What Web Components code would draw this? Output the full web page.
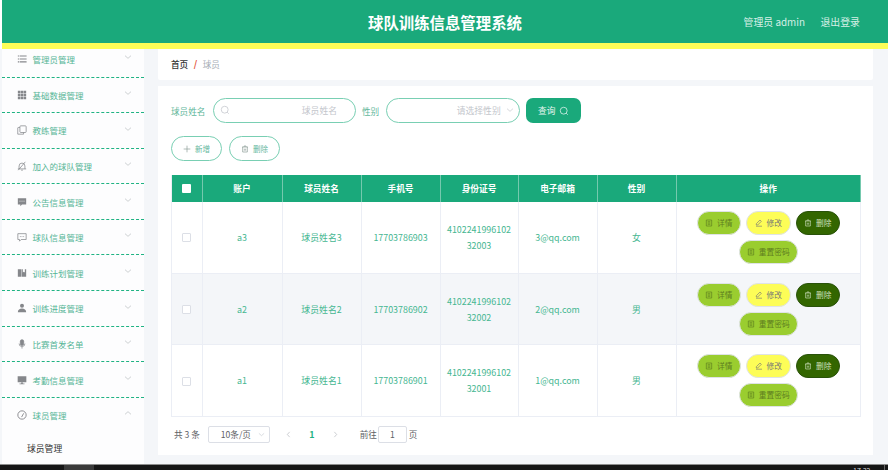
<!DOCTYPE html>
<html lang="zh"><head><meta charset="utf-8"><style>
html,body{margin:0;padding:0;height:470px;overflow:hidden;background:#fff;font-family:"Noto Sans CJK SC","Noto Sans",sans-serif}
</style></head><body>
<app-shell></app-shell>
<script>
const I={
 search:'<svg viewBox="0 0 16 16" fill="none" stroke="currentColor" stroke-width="1.2"><circle cx="7.5" cy="7.5" r="5.5"/><path d="M11.5 11.5L14 14"/></svg>',
 chev:'<svg viewBox="0 0 12 12" fill="none" stroke="currentColor" stroke-width="1"><path d="M1.5 4l4.5 4 4.5-4"/></svg>',
 up:'<svg viewBox="0 0 12 12" fill="none" stroke="currentColor" stroke-width="1"><path d="M1.5 8l4.5-4 4.5 4"/></svg>',
 plus:'<svg viewBox="0 0 12 12" fill="none" stroke="currentColor" stroke-width="1"><path d="M6 1v10M1 6h10"/></svg>',
 trash:'<svg viewBox="0 0 12 12" fill="none" stroke="currentColor" stroke-width="1"><path d="M1.5 3h9M4.5 3V1.5h3V3M2.5 3v7.5h7V3M5 5.5v3M7 5.5v3"/></svg>',
 doc:'<svg viewBox="0 0 12 12" fill="none" stroke="currentColor" stroke-width="1"><path d="M2 1.5h8v9H2zM4 4h4M4 6h4M4 8h4"/></svg>',
 edit:'<svg viewBox="0 0 12 12" fill="none" stroke="currentColor" stroke-width="1"><path d="M7.5 1.5l2 2L4 9H2V7zM1.500 10.800h9"/></svg>',
 menu:'<svg viewBox="0 0 12 12" fill="currentColor"><path d="M1 1.800h1.800v1.300H1zM3.500 1.800H11.500v1.300H3.500zM1 5.300h1.800v1.300H1zM3.500 5.300H11.500v1.300H3.500zM1 8.800h1.800v1.300H1zM3.500 8.800H11.500v1.300H3.500z"/></svg>',
 grid:'<svg viewBox="0 0 12 12" fill="currentColor"><path d="M1 1h3v3H1zM4.500 1h3v3h-3zM8 1h3v3H8zM1 4.500h3v3H1zM4.500 4.500h3v3h-3zM8 4.500h3v3H8zM1 8h3v3H1zM4.500 8h3v3h-3zM8 8h3v3H8z"/></svg>',
 copy:'<svg viewBox="0 0 12 12" fill="none" stroke="currentColor" stroke-width=".9"><rect x="3.500" y="1" width="7.500" height="8" rx="1"/><path d="M3.500 3H1.500a.6.6 0 0 0-.6.6V11h7V9"/></svg>',
 bell:'<svg viewBox="0 0 12 12" fill="none" stroke="currentColor" stroke-width=".9"><path d="M2.500 9.500V6a3.500 3.500 0 0 1 7 0v3.500M1 9.500h10M5 11h2M1.500 11L10 1"/></svg>',
 chatf:'<svg viewBox="0 0 12 12" fill="currentColor"><path d="M1 1.500h10v7.500H6L4 11V9H1z"/><path fill="#fff" d="M3 4.500h1.200v1H3zM5.400 4.500h1.200v1H5.400zM7.800 4.500H9v1H7.800z"/></svg>',
 chat:'<svg viewBox="0 0 12 12" fill="none" stroke="currentColor" stroke-width=".9"><path d="M1 2h10v7H5l-2 2V9H1z"/><path d="M3.500 5.500h1M5.500 5.500h1M7.500 5.500h1"/></svg>',
 book:'<svg viewBox="0 0 12 12" fill="currentColor"><path d="M1 1.500h4v9H1zM5.500 1.500h1.500v4l1.200-1 1.200 1v-4H11v9H5.500z"/></svg>',
 user:'<svg viewBox="0 0 12 12" fill="currentColor"><circle cx="6" cy="3.300" r="2.400"/><path d="M1 11c0-3 2.200-4.500 5-4.500s5 1.500 5 4.500z"/></svg>',
 mic:'<svg viewBox="0 0 12 12" fill="none" stroke="currentColor" stroke-width=".9"><rect x="4" y=".8" width="4" height="7" rx="2" fill="currentColor"/><path d="M2.500 5.500a3.500 3.500 0 0 0 7 0M6 9v2.500"/></svg>',
 mon:'<svg viewBox="0 0 12 12" fill="currentColor"><path d="M.8 1.500h10.400v7.300H.8zM5 9h2v1.200h2V11H3v-.8h2z"/></svg>',
 gauge:'<svg viewBox="0 0 12 12" fill="none" stroke="currentColor" stroke-width="1.100"><circle cx="6" cy="6" r="5"/><path d="M5.500 8.500L8 4"/></svg>'
};
function def(name,css,html){
 customElements.define(name,class extends HTMLElement{
  constructor(){super();const r=this.attachShadow({mode:'open'});
   r.innerHTML='<style>'+css+'</style>'+(typeof html==='function'?html(this):html);}
 });
}
def('top-bar',`
 :host{display:flex;align-items:center;height:43px;margin-left:2px;background:#1aa97b;border-bottom:6px solid #fdfd57;color:#fff;position:relative;padding:0 28px 0 0;justify-content:flex-end;gap:15.500px;font-size:9.900px;box-sizing:content-box}
 .t{position:absolute;left:366px;width:154px;top:9px;font-size:15.400px;font-weight:700;line-height:26px;white-space:nowrap}
 span{color:#d6efe6;line-height:16px;margin-top:1px}
`,`<div class="t">球队训练信息管理系统</div><span>管理员 admin</span><span>退出登录</span>`);

def('nav-item',`
 :host{display:block;height:35.600px;box-sizing:border-box;border-bottom:1.500px dashed #1fb383;position:relative}
 .r{display:flex;align-items:center;height:34px;padding:.5px 0 0 15px;box-sizing:border-box;gap:5.500px;font-size:8.500px;color:#55b596}
 svg{display:block}
 .i{width:10px;height:10px;color:#85878b;flex:none}
 .i svg{width:10px;height:10px}
 .c{position:absolute;left:122px;top:11.500px;width:8px;height:8px;color:#b5b9bd}
 .c svg{width:8px;height:8px}
 .s{padding:0 0 0 25px;font-size:8.800px;color:#333;height:32px;line-height:33px}
 :host([open]){height:67px}
`,t=>`<div class="r"><span class="i">${I[t.getAttribute('icon')]}</span><span>${t.getAttribute('label')}</span></div><span class="c">${t.hasAttribute('open')?I.up:I.chev}</span>${t.hasAttribute('open')?`<div class="s">${t.getAttribute('sub')}</div>`:''}`);

def('side-bar',`
 :host{display:block;width:142px;margin-left:2px;background:#fdfdfe;overflow:hidden;flex:none}
 .in{margin-top:-7.100px}
`,`<div class="in"><slot></slot></div>`);

def('bread-crumb',`
 :host{display:flex;align-items:center;height:31px;box-sizing:border-box;background:#fff;padding:0 12px 2px 13px;font-size:8.600px;color:#333;font-weight:500;border-radius:0 0 2px 2px}
 i{font-style:normal;color:#e2543a;margin:0 5.500px;font-size:9px;font-weight:700}
 span{color:#a6adb5;font-weight:400}
`,`首页<i>/</i><span>球员</span>`);

def('pill-input',`
 :host{display:flex;align-items:center;box-sizing:border-box;height:25px;border:1px solid #79cfb3;border-radius:13px;background:#fff;position:relative;font-size:8.800px;color:#c3c6cc;justify-content:flex-end}
 .s{position:absolute;left:6px;top:6px;width:10px;height:10px;color:#c3c6cc}
 .d{position:absolute;right:5px;top:7px;width:8px;height:8px;color:#c3c6cc}
 svg{display:block}
`,t=>`${t.hasAttribute('search')?`<span class="s">${I.search}</span>`:''}<span style="margin-right:${t.getAttribute('mr')}px">${t.getAttribute('ph')}</span>${t.hasAttribute('drop')?`<span class="d">${I.chev}</span>`:''}`);

def('ghost-btn',`
 :host{display:inline-flex;align-items:center;justify-content:center;gap:4px;box-sizing:border-box;width:51px;height:25px;border:1px solid #79cfb3;border-radius:13px;background:#fff;font-size:7.500px;color:#65b79d}
 span{width:8px;height:8px;display:block;color:#8a9a94}
 svg{display:block}
`,t=>`<span>${I[t.getAttribute('icon')]}</span>${t.getAttribute('label')}`);

def('act-btn',`
 :host{display:inline-flex;align-items:center;justify-content:center;gap:4px;box-sizing:border-box;height:24px;border-radius:12px;font-size:7.700px;border:1px solid #dfe3e6;color:#5e7d1f;background:#9acd2f;flex:none;width:44.500px}
 :host([k=y]){background:#fdfd57;color:#777}
 :host([k=d]){background:#336600;color:#cfe0bf;border-color:#29520a}
 :host([k=w]){width:59px}
 span{width:8px;height:8px;display:block}
 svg{display:block}
`,t=>`<span>${I[t.getAttribute('icon')]}</span>${t.getAttribute('label')}`);

def('data-table',`
 :host{display:block}
 .g{display:grid;grid-template-columns:30.500px 80px 79px 79px 78px 79px 79px 184.500px;border-left:1px solid #ebeef5;font-size:8.900px;color:#45b691;text-align:center}
 .h{background:#1aa97b;color:#fff;font-weight:700;height:27px;display:flex;align-items:center;justify-content:center;border-right:1px solid #75c9ae;box-sizing:border-box;font-size:8.700px}
 .h:last-child{border-right:none}
 .c{display:flex;align-items:center;justify-content:center;height:71.700px;box-sizing:border-box;border-right:1px solid #ebeef5;border-bottom:1px solid #ebeef5;background:var(--bg,#fff);line-height:16px;padding:1px 8px 0}
 .alt{--bg:#f4f6f9}
 .cb{width:9px;height:9px;background:#fff;border:1px solid #dcdfe6;border-radius:1px;box-sizing:border-box}
 .hc{width:9px;height:9px;background:#fff;border-radius:1px}
 .c.ops{flex-wrap:wrap;align-content:center;gap:5px;padding:0 15px}
 .r{display:contents}
 .c.id{word-break:break-all;padding:1px 6px 0}
`,()=>{
 const rows=[['a3','球员姓名3','17703786903','410224199610232003','3@qq.com','女'],['a2','球员姓名2','17703786902','410224199610232002','2@qq.com','男'],['a1','球员姓名1','17703786901','410224199610232001','1@qq.com','男']];
 let h='<div class="g"><div class="h"><span class="hc"></span></div>'+['账户','球员姓名','手机号','身份证号','电子邮箱','性别','操作'].map(x=>`<div class="h">${x}</div>`).join('');
 rows.forEach((r,i)=>{
  h+=`<div class="r ${i==1?'alt':''}"><div class="c"><span class="cb"></span></div>`+r.map((v,j)=>`<div class="c ${j==3?'id':''}">${v}</div>`).join('')+
  `<div class="c ops"><act-btn icon="doc" label="详情"></act-btn><act-btn k="y" icon="edit" label="修改"></act-btn><act-btn k="d" icon="trash" label="删除"></act-btn><act-btn k="w" icon="doc" label="重置密码"></act-btn></div></div>`;
 });
 return h+'</div>';
});

def('page-bar',`
 :host{display:flex;align-items:center;font-size:8.600px;color:#606266;height:24px}
 .sz{display:flex;align-items:center;justify-content:space-between;box-sizing:border-box;width:62px;height:17px;border:1px solid #dcdfe6;border-radius:2px;margin-left:8px;padding:0 4px 0 12px}
 .sz b{font-weight:400;width:7px;height:7px;color:#c0c4cc;display:block}
 svg{display:block}
 .a{width:7px;height:7px;color:#a9adb3;display:block}
 .n{color:#1fb383;font-weight:700;margin:0 17.500px;font-size:9px}
 .ip{display:flex;align-items:center;justify-content:center;box-sizing:border-box;width:29px;height:17px;border:1px solid #dcdfe6;border-radius:2px;margin:0 2px 0 1px}
`,`<span>共 3 条</span><div class="sz"><span>10条/页</span><b>${I.chev}</b></div>
<span class="a" style="margin-left:15px;transform:rotate(90deg)">${I.chev}</span><span class="n">1</span><span class="a" style="transform:rotate(-90deg)">${I.chev}</span>
<span style="margin-left:20.500px">前往</span><span class="ip">1</span><span>页</span>`);

def('main-card',`
 :host{display:block;height:369px;box-sizing:border-box;background:#fff;padding:12px 12px 0 13px}
 .f{display:flex;align-items:center;height:25px;font-size:8.600px;color:#5fb79b}
 .q{display:flex;align-items:center;justify-content:center;gap:4px;width:55px;height:25px;background:#1aa97b;border-radius:7px;color:#e6f5f0;font-size:8.700px;margin-left:6px}
 .q span{width:10px;height:10px;display:block}
 svg{display:block}
 .b{display:flex;gap:7px;margin-top:13px;margin-bottom:14px}
 page-bar{margin-top:5px;margin-left:3px}
`,`<div class="f"><span style="width:42px">球员姓名</span><pill-input search ph="球员姓名" mr="18" style="width:143px"></pill-input><span style="margin:0 7px 0 6px">性别</span><pill-input drop ph="请选择性别" mr="18.500" style="width:134px"></pill-input><div class="q">查询<span>${I.search}</span></div></div>
<div class="b"><ghost-btn icon="plus" label="新增"></ghost-btn><ghost-btn icon="trash" label="删除"></ghost-btn></div>
<data-table></data-table><page-bar></page-bar>`);

def('task-bar',`
 :host{display:flex;height:6px;background:#161616;border-top:1px solid #8d8d8d;box-sizing:border-box;position:relative;overflow:hidden;color:#ddd;font-size:7px;line-height:9px}
 .s{margin-left:64px;width:30px;background:#3a3a3a}
 .t{position:absolute;left:853px;top:2px}
 .k{position:absolute;left:884px;top:0;width:1px;height:5px;background:#666}
`,`<span class="s"></span><span class="t">17:32</span><span class="k"></span>`);

def('app-shell',`
 :host{display:flex;flex-direction:column;width:888px;height:470px;background:#fff;overflow:hidden}
 .m{display:flex;height:415px;background:#f4f6f9;overflow:hidden}
 .p{flex:none;width:715px;margin-left:14px;display:flex;flex-direction:column;gap:6px}
`,`<top-bar></top-bar><div class="m"><side-bar>
<nav-item icon="menu" label="管理员管理"></nav-item>
<nav-item icon="grid" label="基础数据管理"></nav-item>
<nav-item icon="copy" label="教练管理"></nav-item>
<nav-item icon="bell" label="加入的球队管理"></nav-item>
<nav-item icon="chatf" label="公告信息管理"></nav-item>
<nav-item icon="chat" label="球队信息管理"></nav-item>
<nav-item icon="book" label="训练计划管理"></nav-item>
<nav-item icon="user" label="训练进度管理"></nav-item>
<nav-item icon="mic" label="比赛首发名单"></nav-item>
<nav-item icon="mon" label="考勤信息管理"></nav-item>
<nav-item icon="gauge" label="球员管理" open sub="球员管理"></nav-item>
</side-bar><div class="p"><bread-crumb></bread-crumb><main-card></main-card></div></div><task-bar></task-bar>`);
</script></body></html>
